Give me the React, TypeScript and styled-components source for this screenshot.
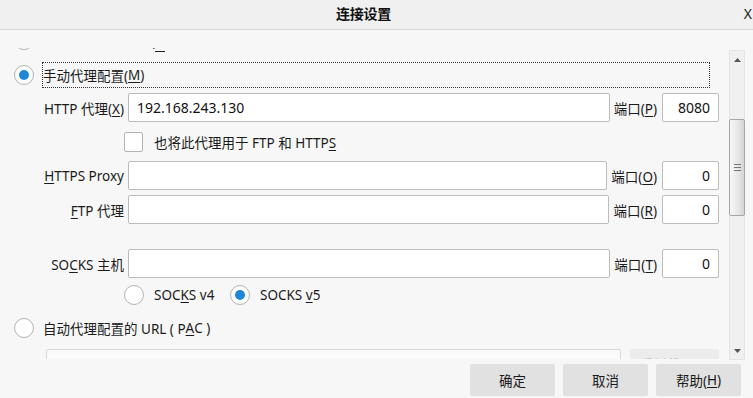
import React from "react";
import styled, { createGlobalStyle } from "styled-components";

const Global = createGlobalStyle`
  html, body { margin: 0; padding: 0; background: #f7f7f7; }
  body { font-family: "Noto Sans", "Noto Sans CJK SC", sans-serif; font-size: 13.5px; color: #1b1b1b; }
  * { box-sizing: border-box; }
  u { text-underline-offset: 2px; }
`;

const Dialog = styled.div`
  width: 753px;
  height: 398px;
  display: flex;
  flex-direction: column;
  overflow: hidden;
  background: #f7f7f7;
`;

const TitleBar = styled.div`
  height: 30px;
  flex: none;
  display: flex;
  align-items: center;
  background: #f0f0f0;
  border-bottom: 1px solid #d8d8d8;
`;

const Title = styled.div`
  flex: 1;
  text-align: center;
  font-size: 14px;
  font-weight: 700;
  color: #111;
  letter-spacing: -0.3px;
  padding-bottom: 3px;
`;

const CloseBtn = styled.div`
  width: 26px;
  text-align: right;
  padding-right: 1px;
  font-size: 14px;
  color: #222;
  padding-bottom: 3px;
`;

const Middle = styled.div`
  height: 330px;
  flex: none;
  display: flex;
  align-items: flex-start;
  padding-top: 18px;
`;

const Viewport = styled.div`
  width: 725px;
  height: 311px;
  overflow: hidden;
  flex: none;
`;

const Content = styled.div`
  margin-top: -21px;
  padding: 0 6px 0 14px;
  display: flex;
  flex-direction: column;
`;

const RadioRow = styled.div<{ $mt: number }>`
  display: flex;
  align-items: center;
  height: 26px;
  margin-top: ${(p) => p.$mt}px;
`;

const Radio = styled.span<{ $checked?: boolean }>`
  width: 20px;
  height: 20px;
  flex: none;
  border-radius: 50%;
  border: 1px solid #b3b3b3;
  background: #fff;
  display: flex;
  align-items: center;
  justify-content: center;
  &::after {
    content: "";
    width: 10px;
    height: 10px;
    border-radius: 50%;
    background: #1f87d6;
    display: ${(p) => (p.$checked ? "block" : "none")};
  }
`;

const RadioLabel = styled.div<{ $focused?: boolean }>`
  flex: 1;
  height: 26px;
  margin-left: 8px;
  margin-right: 9px;
  display: flex;
  align-items: center;
  border: 1px dotted ${(p) => (p.$focused ? "#333" : "transparent")};
  white-space: nowrap;
`;

const HiddenMnemonic = styled.u`
  text-underline-offset: 6px;
`;

const FieldRow = styled.div<{ $mt: number }>`
  display: flex;
  align-items: center;
  height: 29px;
  margin-top: ${(p) => p.$mt}px;
  padding-left: 24px;
`;

const FieldLabel = styled.div`
  width: 86px;
  flex: none;
  text-align: right;
  white-space: nowrap;
`;

const Input = styled.div<{ $align?: string }>`
  flex: 1;
  height: 29px;
  margin-left: 4px;
  background: #fff;
  border: 1px solid #bcbcbc;
  border-radius: 2px;
  display: flex;
  align-items: center;
  padding: 0 8px;
  justify-content: ${(p) => (p.$align === "right" ? "flex-end" : "flex-start")};
  color: #111;
  font-size: 14px;
`;

const PortLabel = styled.div`
  flex: none;
  margin-left: 4px;
  margin-right: 5px;
  white-space: nowrap;
`;

const PortInput = styled(Input)`
  flex: none;
  width: 57px;
  margin-left: 0;
`;

const CheckRow = styled.div`
  display: flex;
  align-items: center;
  height: 20px;
  margin-top: 10px;
  padding-left: 110px;
`;

const Checkbox = styled.span`
  width: 19px;
  height: 20px;
  flex: none;
  background: #fff;
  border: 1px solid #b3b3b3;
  border-radius: 2px;
`;

const CheckLabel = styled.span`
  margin-left: 11px;
`;

const VersionRow = styled.div`
  display: flex;
  align-items: center;
  height: 20px;
  margin-top: 7px;
  padding-left: 110px;
`;

const VersionLabel = styled.span<{ $w?: number }>`
  margin-left: 10px;
  width: ${(p) => (p.$w ? `${p.$w}px` : "auto")};
`;

const PacRow = styled.div`
  display: flex;
  align-items: flex-start;
  height: 29px;
  margin-top: 8px;
  padding-left: 32px;
`;

const PacInput = styled.div`
  flex: 1;
  height: 29px;
  background: #fafafa;
  border: 1px solid #d9d9d9;
  border-radius: 2px;
`;

const ReloadBtn = styled.div`
  width: 89px;
  height: 29px;
  margin-left: 9px;
  flex: none;
  background: #ececec;
  border-radius: 2px;
  color: #a8a8a8;
  display: flex;
  align-items: center;
  justify-content: center;
`;

const ScrollBar = styled.div`
  width: 16px;
  height: 310px;
  margin-top: 2px;
  margin-left: 4px;
  flex: none;
  background: #f0f0f0;
  border: 1px solid #e4e4e4;
  display: flex;
  flex-direction: column;
`;

const Arrow = styled.div`
  height: 17px;
  flex: none;
  display: flex;
  align-items: center;
  justify-content: center;
`;

const Track = styled.div`
  flex: 1;
`;

const Thumb = styled.div<{ $top: number; $h: number }>`
  margin-top: ${(p) => p.$top}px;
  margin-left: -1px;
  width: 16px;
  height: ${(p) => p.$h}px;
  border: 1px solid #a6a6a6;
  border-radius: 2px;
  background: linear-gradient(to right, #f7f7f7, #e6e6e6 60%, #d4d4d4);
  display: flex;
  align-items: center;
  justify-content: center;
`;

const Footer = styled.div`
  flex: 1;
  display: flex;
  justify-content: flex-end;
  align-items: flex-start;
  gap: 8px;
  padding: 4px 12px 0 0;
`;

const Button = styled.div`
  width: 85px;
  height: 32px;
  background: #e1e1e1;
  border-radius: 2px;
  display: flex;
  align-items: center;
  justify-content: center;
  color: #1a1a1a;
`;

const Tri = ({ up }: { up?: boolean }) => (
  <svg width="7" height="4" viewBox="0 0 7 4">
    <polygon points={up ? "0,4 7,4 3.5,0" : "0,0 7,0 3.5,4"} fill="#555" />
  </svg>
);

const Grip = () => (
  <svg width="7" height="7" viewBox="0 0 7 7">
    <rect x="0" y="0" width="7" height="1" fill="#777" />
    <rect x="0" y="3" width="7" height="1" fill="#777" />
    <rect x="0" y="6" width="7" height="1" fill="#777" />
  </svg>
);

export default function App() {
  return (
    <>
      <Global />
      <Dialog>
        <TitleBar>
          <Title>连接设置</Title>
          <CloseBtn>X</CloseBtn>
        </TitleBar>
        <Middle>
          <Viewport>
            <Content>
              <RadioRow $mt={0}>
                <Radio />
                <RadioLabel>
                  使用系统代理设置(<HiddenMnemonic>U</HiddenMnemonic>)
                </RadioLabel>
              </RadioRow>
              <RadioRow $mt={9}>
                <Radio $checked />
                <RadioLabel $focused>
                  手动代理配置(<u>M</u>)
                </RadioLabel>
              </RadioRow>
              <FieldRow $mt={5}>
                <FieldLabel>
                  HTTP 代理(<u>X</u>)
                </FieldLabel>
                <Input>192.168.243.130</Input>
                <PortLabel>
                  端口(<u>P</u>)
                </PortLabel>
                <PortInput $align="right">8080</PortInput>
              </FieldRow>
              <CheckRow>
                <Checkbox />
                <CheckLabel>
                  也将此代理用于 FTP 和 HTTP<u>S</u>
                </CheckLabel>
              </CheckRow>
              <FieldRow $mt={9}>
                <FieldLabel>
                  <u>H</u>TTPS Proxy
                </FieldLabel>
                <Input />
                <PortLabel>
                  端口(<u>O</u>)
                </PortLabel>
                <PortInput $align="right">0</PortInput>
              </FieldRow>
              <FieldRow $mt={5}>
                <FieldLabel>
                  <u>F</u>TP 代理
                </FieldLabel>
                <Input />
                <PortLabel>
                  端口(<u>R</u>)
                </PortLabel>
                <PortInput $align="right">0</PortInput>
              </FieldRow>
              <FieldRow $mt={25}>
                <FieldLabel>
                  SO<u>C</u>KS 主机
                </FieldLabel>
                <Input />
                <PortLabel>
                  端口(<u>T</u>)
                </PortLabel>
                <PortInput $align="right">0</PortInput>
              </FieldRow>
              <VersionRow>
                <Radio />
                <VersionLabel $w={76}>
                  SOC<u>K</u>S v4
                </VersionLabel>
                <Radio $checked />
                <VersionLabel>
                  SOCKS <u>v</u>5
                </VersionLabel>
              </VersionRow>
              <RadioRow $mt={10}>
                <Radio />
                <RadioLabel>
                  自动代理配置的 URL ( P<u>A</u>C )
                </RadioLabel>
              </RadioRow>
              <PacRow>
                <PacInput />
                <ReloadBtn>重新载入(E)</ReloadBtn>
              </PacRow>
            </Content>
          </Viewport>
          <ScrollBar>
            <Arrow>
              <Tri up />
            </Arrow>
            <Track>
              <Thumb $top={51} $h={97}>
                <Grip />
              </Thumb>
            </Track>
            <Arrow>
              <Tri />
            </Arrow>
          </ScrollBar>
        </Middle>
        <Footer>
          <Button>确定</Button>
          <Button>取消</Button>
          <Button>
            帮助(<u>H</u>)
          </Button>
        </Footer>
      </Dialog>
    </>
  );
}
